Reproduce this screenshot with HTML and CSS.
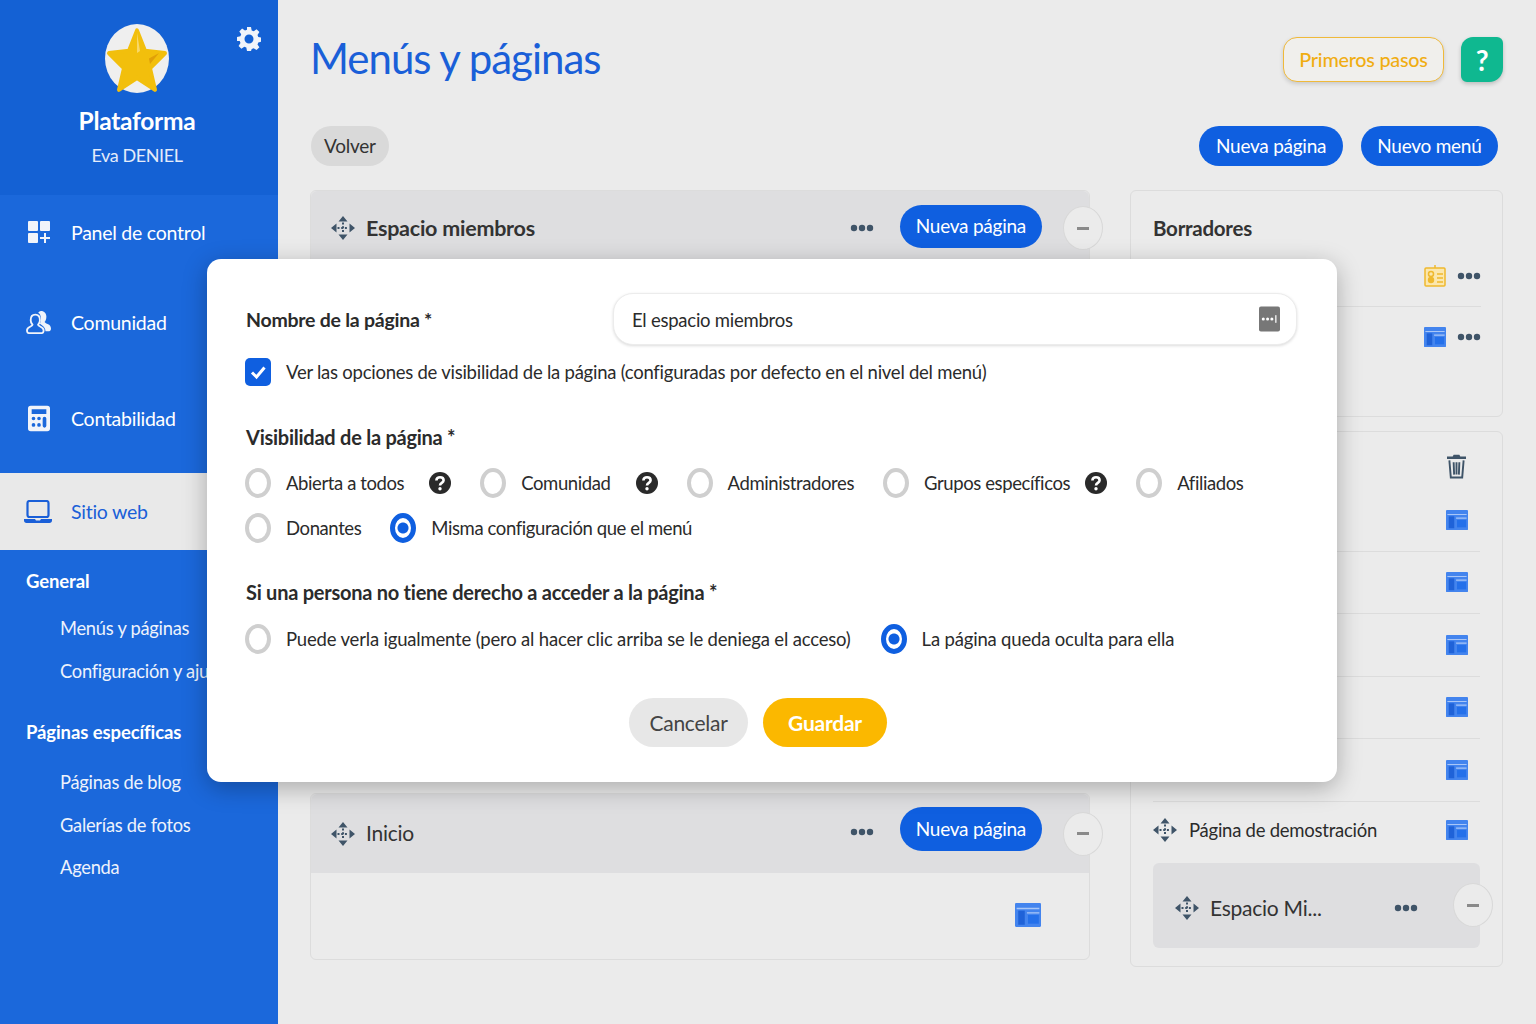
FILE: index.html
```html
<!DOCTYPE html>
<html lang="es">
<head>
    <meta charset="UTF-8">
    <meta name="viewport" content="width=device-width, initial-scale=1.0">
    <title>Menús y páginas</title>
    <link rel="stylesheet" href="styles.css">
</head>
<body>
    <svg class="sprite" width="0" height="0">
        <symbol id="i-move" viewBox="0 0 24 24">
            <path fill="currentColor" d="M12 0l4.500 5.500h-9zM12 24l-4.500-5.500h9zM0 12l5.500-4.500v9zM24 12l-5.500 4.500v-9z"/>
            <path fill="none" stroke="currentColor" stroke-width="2" stroke-dasharray="2 1.700" d="M12 6.500v11M6.500 12h11"/>
        </symbol>
        <symbol id="i-page" viewBox="0 0 24 24">
            <rect width="24" height="22" y="1" rx="1" fill="#4384ee"/>
            <path fill="none" stroke="#a9c6f7" stroke-width="1.200" d="M1.500 6h21M11 10h11.500"/>
            <rect x="3" y="8" width="6" height="13" fill="#1f62d8"/>
            <rect x="12" y="12" width="10" height="8" fill="#2470ea"/>
        </symbol>
        <symbol id="i-dots" viewBox="0 0 24 8">
            <circle cx="4" cy="4" r="3.200" fill="currentColor"/>
            <circle cx="12" cy="4" r="3.200" fill="currentColor"/>
            <circle cx="20" cy="4" r="3.200" fill="currentColor"/>
        </symbol>
        <symbol id="i-help" viewBox="0 0 22 22">
            <circle cx="11" cy="11" r="11" fill="#2a2a2a"/>
            <path fill="none" stroke="#fff" stroke-width="2.600" d="M7.400 8.600c0-2.200 1.600-3.400 3.600-3.400s3.600 1.200 3.600 3.100c0 2.600-3.600 2.600-3.600 5.200"/>
            <circle cx="11" cy="16.800" r="1.700" fill="#fff"/>
        </symbol>
    </svg>

    <aside class="sidebar">
        <div class="brand">
            <div class="logo">
                <svg viewBox="0 0 64 64" width="64" height="69" preserveAspectRatio="none">
                    <circle cx="32" cy="32" r="32" fill="#efefef"/>
                    <path fill="#f2bf0c" stroke="#f2bf0c" stroke-width="4" stroke-linejoin="round" d="M32 6l8 19 20 2-15 14 5 20-18-11-18 11 5-20L4 27l20-2z"/>
                    <path fill="#f8d868" d="M32 8l3 17-3 2z"/>
                    <path fill="#e0a008" d="M44 32l10-5-9 10z"/>
                </svg>
            </div>
            <svg class="gear" viewBox="0 0 24 24" width="24" height="24">
                <path fill="#f1f4fa" fill-rule="evenodd" d="M10 0h4l.7 3.400 2 .8L19.600 2.300l2.800 2.800-1.900 2.900.8 2 3.400.7v4l-3.400.7-.8 2 1.900 2.900-2.800 2.800-2.900-1.900-2 .8L14 24h-4l-.7-3.400-2-.8-2.900 1.900-2.800-2.800 1.900-2.900-.8-2L0 14v-4l3.400-.7.8-2-1.900-2.900 2.800-2.800 2.900 1.900 2-.8zM12 7.500a4.500 4.500 0 1 0 0 9 4.500 4.500 0 0 0 0-9z"/>
            </svg>
            <div class="brand-name">Plataforma</div>
            <div class="brand-user">Eva DENIEL</div>
        </div>

        <nav class="menu">
            <a class="menu-item item-panel">
                <svg viewBox="0 0 24 24" width="24" height="24">
                    <g fill="#f1f4fa"><rect x="1" y="1" width="10" height="10" rx="1"/><rect x="13" y="1" width="10" height="10" rx="1"/><rect x="1" y="13" width="10" height="10" rx="1"/><path d="M17 13h2v4h4v2h-4v4h-2v-4h-4v-2h4z"/></g>
                </svg>
                Panel de control
            </a>
            <a class="menu-item item-comunidad">
                <svg viewBox="0 0 28 26" width="26" height="24">
                    <path fill="#f1f4fa" d="M16 1c4 0 6 3 6 6 0 3-1 5-2 6 1 2 7 2 7 7 0 2-1 3-2 3h-4c0-4-3-6-6-8 1-2 1-4 1-6 0-3-1-5-3-6 1-1 2-2 3-2z"/>
                    <path fill="none" stroke="#f1f4fa" stroke-width="2" d="M10 5c3 0 5 2 5 6 0 2-1 4-2 5 0 2 6 2 6 6 0 2-1 3-2 3H3c-1 0-2-1-2-3 0-4 6-4 6-6-1-1-2-3-2-5 0-4 2-6 5-6z"/>
                </svg>
                Comunidad
            </a>
            <a class="menu-item item-conta">
                <svg viewBox="0 0 24 28" width="22" height="27">
                    <path fill="#f1f4fa" fill-rule="evenodd" d="M3 0h18a3 3 0 0 1 3 3v22a3 3 0 0 1-3 3H3a3 3 0 0 1-3-3V3a3 3 0 0 1 3-3zM4 4v5h16V4zM6 12a2 2 0 1 0 0 4 2 2 0 0 0 0-4zm6 0a2 2 0 1 0 0 4 2 2 0 0 0 0-4zm6 0a2 2 0 0 0-2 2v8a2 2 0 0 0 4 0v-8a2 2 0 0 0-2-2zM6 19a2 2 0 1 0 0 4 2 2 0 0 0 0-4zm6 0a2 2 0 1 0 0 4 2 2 0 0 0 0-4z"/>
                </svg>
                Contabilidad
            </a>
            <a class="menu-item active">
                <svg viewBox="0 0 28 24" width="28" height="24">
                    <rect x="3.500" y="1" width="21" height="16" rx="2" fill="none" stroke="#1a5fd8" stroke-width="2.200"/>
                    <path fill="#1a5fd8" d="M0 19h11l1 1.500h4l1-1.500h11v1.500c0 1.500-1 2.500-2.500 2.500h-23C1 23 0 22 0 20.500z"/>
                </svg>
                Sitio web
            </a>

            <div class="sub-title">General</div>
            <a class="sub-item">Menús y páginas</a>
            <a class="sub-item">Configuración y ajustes</a>

            <div class="sub-title second">Páginas específicas</div>
            <a class="sub-item">Páginas de blog</a>
            <a class="sub-item">Galerías de fotos</a>
            <a class="sub-item">Agenda</a>
        </nav>
    </aside>

    <main class="content">
        <header class="top">
            <h1>Menús y páginas</h1>
            <div class="top-actions">
                <button class="btn-steps">Primeros pasos</button>
                <button class="btn-help">?</button>
            </div>
        </header>

        <div class="toolbar">
            <button class="pill pill-grey">Volver</button>
            <div class="toolbar-right">
                <button class="pill">Nueva página</button>
                <button class="pill">Nuevo menú</button>
            </div>
        </div>

        <div class="columns">
            <div class="col-left">
                <section class="card card-members">
                    <div class="card-head">
                        <svg class="move"><use href="#i-move"/></svg>
                        <h2>Espacio miembros</h2>
                        <svg class="dots"><use href="#i-dots"/></svg>
                        <button class="pill pill-head">Nueva página</button>
                        <span class="collapse"></span>
                    </div>
                </section>
                <section class="card card-home">
                    <div class="card-head">
                        <svg class="move"><use href="#i-move"/></svg>
                        <h2 class="regular">Inicio</h2>
                        <svg class="dots"><use href="#i-dots"/></svg>
                        <button class="pill pill-head">Nueva página</button>
                        <span class="collapse"></span>
                    </div>
                    <div class="card-body">
                        <svg class="page-icon"><use href="#i-page"/></svg>
                    </div>
                </section>
            </div>

            <div class="col-right">
                <section class="card card-drafts">
                    <h2 class="drafts-title">Borradores</h2>
                    <div class="row draft-row line">
                        <svg class="small-icon" viewBox="0 0 22 22">
                            <rect x="1" y="3" width="20" height="18" rx="1" fill="#fbe7ae" stroke="#efb92e" stroke-width="1.500"/>
                            <path fill="none" stroke="#efb92e" stroke-width="1.500" d="M11 0v3M13 9h6M13 13h6M13 17h6"/>
                            <circle cx="7" cy="9" r="2.500" fill="none" stroke="#efb92e" stroke-width="1.500"/>
                            <circle cx="7" cy="15" r="3.200" fill="#efb92e"/>
                        </svg>
                        <svg class="dots"><use href="#i-dots"/></svg>
                    </div>
                    <div class="row draft-row">
                        <svg class="small-icon"><use href="#i-page"/></svg>
                        <svg class="dots"><use href="#i-dots"/></svg>
                    </div>
                </section>

                <section class="card card-pages">
                    <div class="trash-row">
                        <svg class="trash" viewBox="0 0 20 26">
                            <path fill="#3f5468" d="M7 0h6l1 2h6v2.500H0V2h6z"/>
                            <path fill="none" stroke="#3f5468" stroke-width="2" d="M2.500 6l1.500 18h12l1.500-18M7 8l.5 13M10 8v13M13 8l-.5 13"/>
                        </svg>
                    </div>
                    <div class="row page-row line"><svg class="small-icon"><use href="#i-page"/></svg></div>
                    <div class="row page-row line"><svg class="small-icon"><use href="#i-page"/></svg></div>
                    <div class="row page-row line"><svg class="small-icon"><use href="#i-page"/></svg></div>
                    <div class="row page-row line"><svg class="small-icon"><use href="#i-page"/></svg></div>
                    <div class="row page-row line"><svg class="small-icon"><use href="#i-page"/></svg></div>
                    <div class="row demo-row">
                        <svg class="move"><use href="#i-move"/></svg>
                        <span class="demo-name">Página de demostración</span>
                        <svg class="small-icon"><use href="#i-page"/></svg>
                    </div>
                    <div class="sub-menu">
                        <svg class="move"><use href="#i-move"/></svg>
                        <h2 class="regular">Espacio Mi...</h2>
                        <svg class="dots"><use href="#i-dots"/></svg>
                        <span class="collapse"></span>
                    </div>
                </section>
            </div>
        </div>
    </main>

    <!-- modal -->
    <div class="modal">
        <div class="field">
            <label class="field-label">Nombre de la página *</label>
            <div class="input-wrap">
                <input type="text" value="El espacio miembros">
                <span class="pass-icon">
                    <svg viewBox="0 0 22 26" width="21" height="26">
                        <rect width="22" height="26" rx="2" fill="#777"/>
                        <g fill="#fff"><circle cx="4.500" cy="13" r="1.600"/><circle cx="9" cy="13" r="1.600"/><circle cx="13.500" cy="13" r="1.600"/><rect x="17" y="9" width="1.300" height="8"/></g>
                    </svg>
                </span>
            </div>
        </div>

        <div class="check-row">
            <span class="checkbox">
                <svg viewBox="0 0 26 28" width="26" height="28"><path fill="none" stroke="#fff" stroke-width="3" d="M7 14.500l4.500 4.500L19.500 9.500"/></svg>
            </span>
            <span>Ver las opciones de visibilidad de la página (configuradas por defecto en el nivel del menú)</span>
        </div>

        <h3 class="group-title">Visibilidad de la página *</h3>
        <div class="options options-visibility">
            <div class="option"><span class="radio"></span>Abierta a todos<svg class="help"><use href="#i-help"/></svg></div>
            <div class="option"><span class="radio"></span>Comunidad<svg class="help"><use href="#i-help"/></svg></div>
            <div class="option"><span class="radio"></span>Administradores</div>
            <div class="option"><span class="radio"></span>Grupos específicos<svg class="help help-near"><use href="#i-help"/></svg></div>
            <div class="option"><span class="radio"></span>Afiliados</div>
            <div class="option"><span class="radio"></span>Donantes</div>
            <div class="option"><span class="radio on"></span>Misma configuración que el menú</div>
        </div>

        <h3 class="group-title title-access">Si una persona no tiene derecho a acceder a la página *</h3>
        <div class="options options-access">
            <div class="option"><span class="radio"></span>Puede verla igualmente (pero al hacer clic arriba se le deniega el acceso)</div>
            <div class="option"><span class="radio on"></span>La página queda oculta para ella</div>
        </div>

        <div class="modal-actions">
            <button class="btn-cancel">Cancelar</button>
            <button class="btn-save">Guardar</button>
        </div>
    </div>
</body>
</html>
```

FILE: styles.css
```css
:root {
    --blue: #1a5fd8;
    --btn-blue: #0f5fe0;
    --ink: #2b2b2b;
    --slate: #3f5468;
    --line: #dcdcdc;
}

* {
    box-sizing: border-box;
}

body {
    margin: 0;
    height: 1024px;
    overflow: hidden;
    display: flex;
    position: relative;
    background: #ebebeb;
    color: var(--ink);
    font-family: Lato, sans-serif;
    letter-spacing: -0.25px;
}

button {
    font-family: inherit;
    letter-spacing: inherit;
    border: none;
}

.sprite {
    position: absolute;
}

/* sidebar */

.sidebar {
    width: 278px;
    flex-shrink: 0;
    background: #1b68db;
    color: #fff;
}

.brand {
    height: 195px;
    position: relative;
    padding-top: 24px;
    background: #1461d4;
    text-align: center;
}

.logo {
    height: 69px;
    margin-bottom: 12px;
    margin-right: 4px;
}

.gear {
    position: absolute;
    top: 27px;
    left: 237px;
}

.brand-name {
    font-size: 24.5px;
    font-weight: 700;
    line-height: 32px;
    margin-right: 4px;
}

.brand-user {
    font-size: 18px;
    line-height: 26px;
    margin-top: 5px;
    margin-right: 4px;
    letter-spacing: -0.4px;
    color: #e4ecfa;
}

.menu-item {
    display: flex;
    align-items: center;
    gap: 20px;
    padding-left: 26px;
    font-size: 19.5px;
    height: 91px;
}

.menu-item svg {
    flex-shrink: 0;
}

.item-panel {
    height: 76px;
    padding-left: 27px;
    padding-bottom: 2px;
}

.item-comunidad {
    height: 104px;
    gap: 19px;
    padding-bottom: 2px;
}

.item-conta {
    height: 98px;
    padding-left: 28px;
    padding-bottom: 12px;
    gap: 21px;
}

.menu-item.active {
    height: 77px;
    padding-left: 24px;
    gap: 19px;
    background: #e9e9e9;
    color: var(--blue);
}

.sub-title {
    padding: 18px 0 0 26px;
    font-size: 18.5px;
    font-weight: 700;
    line-height: 26px;
    letter-spacing: -0.1px;
    margin-bottom: 21px;
}

.sub-title.second {
    padding-top: 19px;
    margin-bottom: 24px;
}

.sub-item {
    display: block;
    padding-left: 60px;
    font-size: 18.3px;
    line-height: 26px;
    height: 42.5px;
    white-space: nowrap;
    color: #eef3fc;
}

/* main */

.content {
    flex: 1;
    padding: 0 33px 0 32px;
}

.top {
    height: 126px;
    display: flex;
    justify-content: space-between;
    padding-top: 31px;
}

h1 {
    margin: 0;
    font-size: 42px;
    font-weight: 400;
    line-height: 54px;
    letter-spacing: -1px;
    color: var(--blue);
}

.top-actions {
    display: flex;
    gap: 17px;
    padding-top: 6px;
    height: 52px;
}

.btn-steps {
    width: 161px;
    height: 45px;
    padding: 0 0 2px;
    background: #f0efec;
    border: 1.5px solid #efb93a;
    border-radius: 14px;
    color: #f0ad12;
    font-size: 19.8px;
    font-weight: 500;
    box-shadow: 0 2px 4px rgba(0, 0, 0, 0.15);
}

.btn-help {
    width: 42px;
    height: 45px;
    background: #0fb890;
    border-radius: 12px 6px 14px 6px;
    color: #fff;
    font-size: 28px;
    font-weight: 700;
    padding: 0;
    box-shadow: 0 2px 4px rgba(0, 0, 0, 0.2);
}

.toolbar {
    display: flex;
    justify-content: space-between;
    height: 64px;
}

.toolbar-right {
    display: flex;
    gap: 18px;
    padding-right: 5px;
}

.pill {
    height: 40px;
    padding: 0 16.5px 2px;
    border-radius: 20px;
    background: var(--btn-blue);
    color: #fff;
    font-size: 19px;
    white-space: nowrap;
}

.pill-grey {
    padding: 0 13px 2px;
    margin-left: 1px;
    background: #d9d9d9;
    color: #333;
}

.columns {
    display: flex;
    gap: 40px;
}

.col-left {
    width: 780px;
    display: flex;
    flex-direction: column;
    gap: 14px;
}

.col-right {
    width: 373px;
    display: flex;
    flex-direction: column;
    gap: 14px;
}

.card {
    border: 1px solid var(--line);
    border-radius: 6px;
}

.card-members {
    height: 589px;
}

.card-home {
    height: 167px;
}

.card-head {
    display: flex;
    align-items: center;
    padding: 0 47px 0 20px;
    background: #dedee0;
    border-radius: 6px 6px 0 0;
    position: relative;
}

.card-members .card-head {
    height: 74px;
}

.card-home .card-head {
    height: 79px;
}

.card-home h2,
.card-home .dots {
    margin-bottom: 3px;
}

.move {
    width: 24px;
    height: 24px;
    flex-shrink: 0;
    color: var(--slate);
}

h2 {
    margin: 0 0 0 11px;
    flex: 1;
    font-size: 21.5px;
    font-weight: 700;
    color: #333;
}

h2.regular {
    font-weight: 400;
    font-size: 21px;
}

.dots {
    width: 24px;
    height: 8px;
    flex-shrink: 0;
    color: var(--slate);
}

.pill-head {
    margin-left: 26px;
    height: 43px;
    border-radius: 22px;
    padding: 0 16px 1px;
    margin-bottom: 4px;
}

.card-home .pill-head {
    height: 44px;
    margin-bottom: 9px;
}

.collapse {
    position: absolute;
    right: -14px;
    top: 50%;
    width: 40px;
    height: 44px;
    margin-top: -22px;
    border: 1px solid #d8d8d8;
    border-radius: 50%;
    background: #ebebeb;
    display: flex;
    align-items: center;
    justify-content: center;
}

.collapse::before {
    content: "";
    width: 12px;
    height: 3px;
    background: #8a8a8a;
}

.card-body {
    display: flex;
    justify-content: flex-end;
    padding: 29px 48px 0 0;
}

.page-icon {
    width: 26px;
    height: 26px;
}

.card-drafts {
    height: 227px;
    padding: 0 21px 0 22px;
}

.drafts-title {
    height: 73px;
    margin: 0;
    line-height: 74px;
    font-size: 20.5px;
}

.row {
    display: flex;
    align-items: center;
    justify-content: flex-end;
}

.draft-row {
    height: 62px;
    gap: 11px;
    margin-top: -19px;
}

.draft-row + .draft-row {
    margin-top: -1px;
}

.line {
    border-bottom: 1px solid var(--line);
}

.small-icon {
    width: 22px;
    height: 22px;
    flex-shrink: 0;
}

.card-pages {
    height: 536px;
    padding: 0 22px;
    position: relative;
}

.trash-row {
    height: 57px;
    display: flex;
    justify-content: flex-end;
    align-items: flex-end;
    padding: 0 14px 9px 0;
}

.trash {
    width: 19px;
    height: 26px;
}

.page-row {
    height: 62.5px;
    padding-right: 12px;
}

.demo-row {
    height: 56px;
    padding-right: 12px;
    justify-content: flex-start;
}

.demo-name {
    flex: 1;
    margin-left: 12px;
    font-size: 18.5px;
}

.sub-menu {
    height: 85px;
    margin-top: 5px;
    display: flex;
    align-items: center;
    padding: 5px 62px 0 22px;
    background: #dedee0;
    border-radius: 6px;
    position: relative;
}

.sub-menu .collapse {
    right: -13px;
}

/* modal */

.modal {
    position: absolute;
    left: 207px;
    top: 259px;
    width: 1130px;
    height: 523px;
    padding: 34px 40px 0 38px;
    background: #fff;
    border-radius: 14px;
    box-shadow: 0 6px 24px rgba(0, 0, 0, 0.28);
    font-size: 18.5px;
}

.field {
    display: flex;
    align-items: center;
}

.field-label {
    width: 368px;
    padding-left: 1px;
    font-size: 19.5px;
    font-weight: 700;
}

.input-wrap {
    flex: 1;
    position: relative;
}

.input-wrap input {
    display: block;
    width: 100%;
    height: 52px;
    padding: 1px 60px 0 18px;
    border: 1px solid #ececec;
    border-radius: 20px;
    box-shadow: 0 1px 3px rgba(0, 0, 0, 0.14);
    font-family: inherit;
    font-size: inherit;
    letter-spacing: inherit;
    color: var(--ink);
    background: #fff;
}

.pass-icon {
    position: absolute;
    right: 17px;
    top: 13px;
    line-height: 0;
}

.check-row {
    display: flex;
    align-items: center;
    gap: 15px;
    margin-top: 13px;
}

.checkbox {
    width: 26px;
    height: 28px;
    border-radius: 5px;
    background: var(--btn-blue);
    flex-shrink: 0;
    line-height: 0;
}

.group-title {
    margin: 38px 0 0 1px;
    font-size: 20px;
    font-weight: 700;
    line-height: 26px;
}

.title-access {
    margin-top: 35px;
}

.options {
    display: flex;
    flex-wrap: wrap;
    column-gap: 30px;
    row-gap: 13px;
}

.options-visibility {
    column-gap: 29px;
    margin-top: 17px;
    letter-spacing: -0.4px;
}

.options-access {
    margin-top: 18px;
    letter-spacing: -0.18px;
}

.option {
    display: flex;
    align-items: center;
    height: 32px;
    white-space: nowrap;
}

.radio {
    width: 26px;
    height: 30px;
    margin-right: 15px;
    border: 4px solid #cfcfcf;
    border-radius: 50%;
    background: #fff;
    flex-shrink: 0;
}

.radio.on {
    border: 5px solid var(--btn-blue);
    background: radial-gradient(circle, var(--btn-blue) 0 5px, #fff 6px);
}

.help {
    width: 22px;
    height: 22px;
    margin-left: 25px;
    flex-shrink: 0;
}

.help-near {
    margin-left: 15px;
}

.modal-actions {
    display: flex;
    justify-content: center;
    gap: 15px;
    margin-top: 43px;
    padding-right: 26px;
}

.btn-cancel,
.btn-save {
    height: 49px;
    border-radius: 25px;
    font-size: 21px;
}

.btn-cancel {
    width: 119px;
    background: #e7e7e7;
    color: #444;
}

.btn-save {
    width: 124px;
    background: #fbb800;
    color: #fff;
    font-weight: 700;
}
```
